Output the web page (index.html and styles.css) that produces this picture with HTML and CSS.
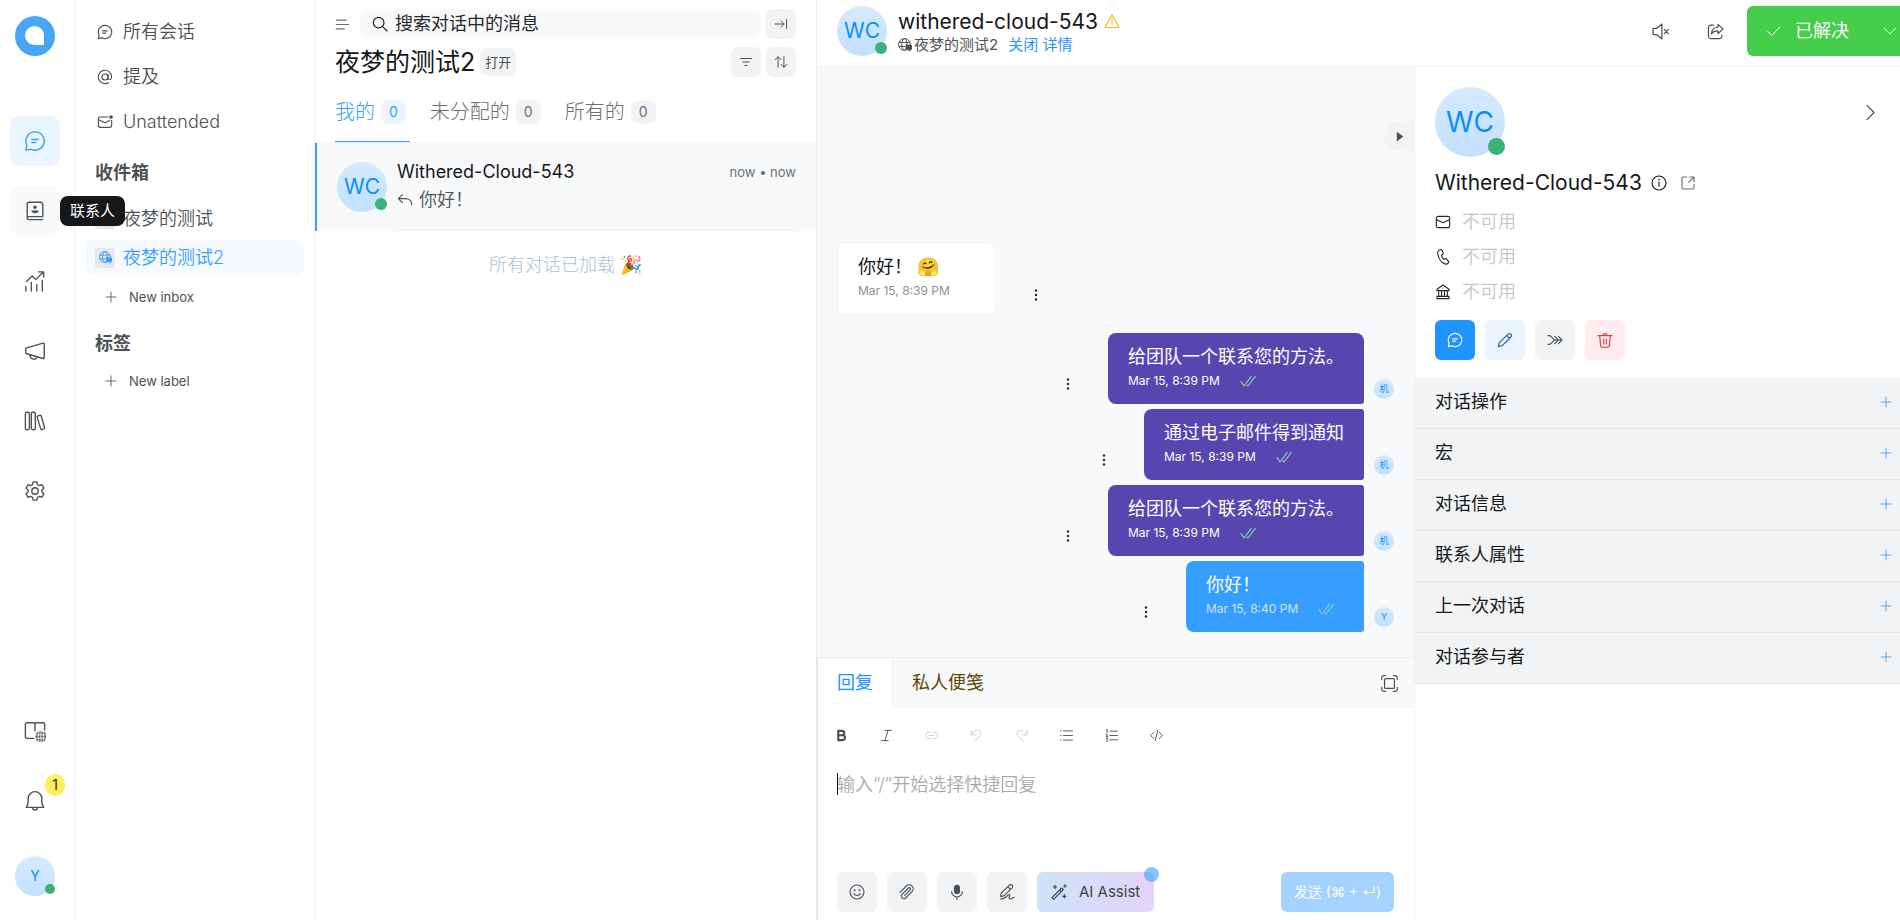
FILE: index.html
```html
<!DOCTYPE html>
<html lang="zh-CN">
<head>
    <meta charset="UTF-8" />
    <meta name="viewport" content="width=device-width, initial-scale=1.0" />
    <title>夜梦的测试2</title>
    <link rel="stylesheet" href="styles.css">
</head>
<body>

<!-- icon sprite -->
<svg class="sprite" aria-hidden="true">
    <symbol id="i-chat" viewBox="0 0 24 24"><path d="M12 2a10 10 0 1 1-4.700 18.800L2 22l1.200-5.300A10 10 0 0 1 12 2Z"/><path d="M8.500 10.300h7M8.500 13.700h4.500"/></symbol>
    <symbol id="i-at" viewBox="0 0 24 24"><circle cx="12" cy="12" r="4.500"/><path d="M16.500 7.500v6c0 3.800 5.500 3.500 5.500-1.500a10 10 0 1 0-4.500 8.300"/></symbol>
    <symbol id="i-mail" viewBox="0 0 24 24"><rect x="2" y="3.500" width="20" height="17" rx="3"/><path d="M2.500 8.500l9.500 4.800 9.500-4.800"/></symbol>
    <symbol id="i-mail-dot" viewBox="0 0 24 24"><path d="M16.500 4.500H5A3 3 0 0 0 2 7.500v9.500A3 3 0 0 0 5 20h14a3 3 0 0 0 3-3V9.500"/><path d="M2.500 8.500l9.500 4.800 7-3.700"/><circle class="fill" cx="21" cy="4.500" r="2.800"/></symbol>
    <symbol id="i-book" viewBox="0 0 24 24"><path d="M3.500 19V4.800A2.300 2.300 0 0 1 5.800 2.500h12.400a2.300 2.300 0 0 1 2.300 2.300v13.400h-17v1.200a2 2 0 0 0 2 2h15"/><circle class="fill" cx="12" cy="8" r="1.900"/><path class="fill" d="M8 11.500h8c0 4-8 4-8 0Z"/></symbol>
    <symbol id="i-chart" viewBox="0 0 24 24"><path d="M2.800 12.500l6-6 4 4L21 2.300M15.800 2h5.700v5.700M2 18v5M8 13.500V23M14 16v7M20 11.500V23"/></symbol>
    <symbol id="i-horn" viewBox="0 0 24 24"><path d="M20.800 3.500L2.900 8.500a1.400 1.400 0 0 0-1 1.300v3.900a1.400 1.400 0 0 0 1 1.300l17.900 5.200a1 1 0 0 0 1.300-1V4.500a1 1 0 0 0-1.300-1ZM6.500 16.300c0 5.200 7 6 7.800 2.300"/></symbol>
    <symbol id="i-library" viewBox="0 0 24 24"><rect x="1.500" y="2.500" width="4.400" height="19" rx="1.500"/><rect x="8" y="2.500" width="4.400" height="19" rx="1.500"/><path d="M15.400 6.300l1.600-.5a1.500 1.500 0 0 1 1.900 1.100l3.500 12.200a1.500 1.500 0 0 1-1 1.800l-1.400.4a1.500 1.500 0 0 1-1.900-1l-3.600-12.200a1.500 1.500 0 0 1 .9-1.800Z"/></symbol>
    <symbol id="i-gear" viewBox="0 0 24 24"><circle cx="12" cy="12" r="3.500"/><path d="M10 2h4l.8 3.200 1.800 1 3.100-1 2 3.600-2.200 2.300v1.800l2.200 2.300-2 3.600-3.100-1-1.800 1L14 22h-4l-.8-3.200-1.800-1-3.100 1-2-3.600 2.200-2.300v-1.800L2.300 8.800l2-3.600 3.100 1 1.800-1Z"/></symbol>
    <symbol id="i-docs" viewBox="0 0 24 24"><path d="M11 20H3A1.500 1.500 0 0 1 1.500 18.500v-14A1.500 1.500 0 0 1 3 3h7a2 2 0 0 1 2 2v7M12 5a2 2 0 0 1 2-2h7a1.500 1.500 0 0 1 1.500 1.500V11"/><circle class="fill" cx="18.500" cy="18" r="6"/><path class="cut" d="M18.500 11.500v13M12 16.200h13M12 19.800h13M16.300 12.200q-1.800 6 0 12M20.700 12.200q1.800 6 0 12"/></symbol>
    <symbol id="i-bell" viewBox="0 0 24 24"><path d="M12 1.800a7.500 7.500 0 0 0-7.500 7.500v5L2.500 19h19l-2-4.700v-5A7.500 7.500 0 0 0 12 1.800ZM9.300 19.200a2.700 2.700 0 0 0 5.400 0"/></symbol>
    <symbol id="i-globe" viewBox="0 0 24 24"><circle cx="11" cy="11" r="10"/><ellipse cx="11" cy="11" rx="4.500" ry="10"/><path d="M2 7.500h18M2 14.500h10"/><path class="fill" d="M13 12h11v8h-3v4l-4-4h-4Z"/></symbol>
    <symbol id="i-plus" viewBox="0 0 24 24"><path d="M12 2v20M2 12h20"/></symbol>
    <symbol id="i-menu" viewBox="0 0 24 24"><path d="M2 5h16M2 12h20M2 19h13"/></symbol>
    <symbol id="i-search" viewBox="0 0 24 24"><circle cx="10" cy="10" r="8"/><path d="M16 16l6.500 6.500"/></symbol>
    <symbol id="i-arrow-end" viewBox="0 0 24 24"><path d="M2 12h15M12 6.500l5.500 5.500-5.500 5.500M21.500 4.500v15"/></symbol>
    <symbol id="i-filter" viewBox="0 0 24 24"><path d="M2.500 6h19M6.500 12h11M10 18h4"/></symbol>
    <symbol id="i-sort" viewBox="0 0 24 24"><path d="M7 21V3M2 8l5-5 5 5M17 3v18M12 16l5 5 5-5"/></symbol>
    <symbol id="i-reply" viewBox="0 0 24 24"><path d="M8 4L2 10l6 6M2 10h11c5 0 8.500 3 9 9"/></symbol>
    <symbol id="i-warn" viewBox="0 0 24 24"><path d="M12 2.500L1.800 20.500a.8.800 0 0 0 .7 1.200h19a.8.800 0 0 0 .7-1.200ZM12 9v6"/><circle class="fill" cx="12" cy="18" r="1"/></symbol>
    <symbol id="i-mute" viewBox="0 0 24 24"><path d="M14 1.500L7 7.500H2.800A1.200 1.200 0 0 0 1.500 8.700v6.600a1.200 1.200 0 0 0 1.300 1.200H7l7 6ZM17.500 9l5.500 6M23 9l-5.500 6"/></symbol>
    <symbol id="i-share" viewBox="0 0 24 24"><path d="M9 3H5.500A3.500 3.500 0 0 0 2 6.500v12A3.500 3.500 0 0 0 5.500 22h12a3.500 3.500 0 0 0 3.500-3.500V17M15.500 2l7 6.500-7 6.500v-4c-5 0-7.500 1.300-9.500 4.500.5-5.500 3.500-9 9.500-9.500Z"/></symbol>
    <symbol id="i-check" viewBox="0 0 24 24"><path d="M1.500 13l6.500 7L22.500 4.500"/></symbol>
    <symbol id="i-down" viewBox="0 0 24 24"><path d="M2 7l10 10L22 7"/></symbol>
    <symbol id="i-right" viewBox="0 0 24 24"><path d="M7 2l10 10L7 22"/></symbol>
    <symbol id="i-play" viewBox="0 0 24 24"><path class="fill" d="M7 3l12 9-12 9Z"/></symbol>
    <symbol id="i-dots" viewBox="0 0 24 24"><circle class="fill" cx="12" cy="3" r="2.400"/><circle class="fill" cx="12" cy="12" r="2.400"/><circle class="fill" cx="12" cy="21" r="2.400"/></symbol>
    <symbol id="i-double" viewBox="0 0 24 24"><path d="M1.500 13l4.500 6.500L17 5M10.500 18l1.500 1.500L23 5"/></symbol>
    <symbol id="i-info" viewBox="0 0 24 24"><circle cx="12" cy="12" r="10.500"/><path d="M12 10.500V17"/><circle class="fill" cx="12" cy="7" r="1.200"/></symbol>
    <symbol id="i-external" viewBox="0 0 24 24"><path d="M10 3H5.500A2.500 2.500 0 0 0 3 5.500v13A2.500 2.500 0 0 0 5.500 21h13a2.500 2.500 0 0 0 2.500-2.500V14M14 3h7v7M21 3l-8 8"/></symbol>
    <symbol id="i-phone" viewBox="0 0 24 24"><path d="M6.500 1.600l2-.5c1-.2 1.800.2 2.200 1l1.400 3.500c.4.900.2 1.700-.5 2.300L9.800 9.700c.5 2.200 1.800 4.300 3.500 5.800l2.400-.7c.9-.2 1.700 0 2.200.8l2.200 3c.5.800.4 1.700-.2 2.300l-1 .9c-1 1-2.500 1.200-4 .5C9 20 4.700 13 4 6.200c-.1-2 .8-4.100 2.500-4.600Z"/></symbol>
    <symbol id="i-bank" viewBox="0 0 24 24"><path d="M12 1.500L3 8v2h18V8ZM3 18.500h18v3.500H3ZM5.500 10v8M9.800 10v8M14.200 10v8M18.500 10v8M12 6h.1"/></symbol>
    <symbol id="i-pen" viewBox="0 0 24 24"><path d="M20.800 3.200a3 3 0 0 0-4.300 0L4 15.700c-.4.400-.6.800-.7 1.300L2 22l5-1.300c.5-.1.900-.3 1.300-.7L20.800 7.500a3 3 0 0 0 0-4.300ZM14.500 5.200l4.300 4.300"/></symbol>
    <symbol id="i-merge" viewBox="0 0 24 24"><path d="M1.500 5.500h2c4 0 5 6.500 9 6.500h10M1.500 18.500h2c4 0 5-6.500 9-6.500M17 6.500l5.500 5.500-5.500 5.500M11.500 6.500L17 12l-5.500 5.500"/></symbol>
    <symbol id="i-trash" viewBox="0 0 24 24"><path d="M1.500 5.500h21M9 5.500a3 3 0 0 1 6 0M4 5.500l1.500 15a2.500 2.500 0 0 0 2.500 2.300h8a2.500 2.500 0 0 0 2.500-2.300l1.500-15M10 10.500v7.500M14 10.500v7.500"/></symbol>
    <symbol id="i-full" viewBox="0 0 24 24"><rect x="5" y="5" width="14" height="14" rx="1.500"/><path d="M1 6.500V4A3 3 0 0 1 4 1H6.500M17.500 1H20A3 3 0 0 1 23 4V6.500M23 17.500v2.500a3 3 0 0 1-3 3H17.500M6.500 23H4A3 3 0 0 1 1 20V17.500"/></symbol>
    <symbol id="i-bold" viewBox="0 0 24 24"><path d="M6 3.500h7a4 4 0 0 1 0 8H6ZM6 11.500h8a4.500 4.500 0 0 1 0 9H6Z" stroke-width="4"/></symbol>
    <symbol id="i-italic" viewBox="0 0 24 24"><path d="M9 2.500h12M3 21.500h12M15 2.500L9 21.500"/></symbol>
    <symbol id="i-link" viewBox="0 0 24 24"><path d="M9.500 6H7a6 6 0 0 0 0 12h2.500M14.500 6H17a6 6 0 0 1 0 12h-2.500M8 12h8"/></symbol>
    <symbol id="i-undo" viewBox="0 0 24 24"><path d="M2 2v9h9M2.500 10.500L9 4a6.500 6.500 0 0 1 9.500 9L9 22.500"/></symbol>
    <symbol id="i-redo" viewBox="0 0 24 24"><path d="M22 2v9h-9M21.500 10.500L15 4a6.500 6.500 0 0 0-9.500 9L15 22.500"/></symbol>
    <symbol id="i-ul" viewBox="0 0 24 24"><path d="M6.500 3.500H23M6.500 12H23M6.500 20.500H23M1 3.500h1M1 12h1M1 20.500h1"/></symbol>
    <symbol id="i-ol" viewBox="0 0 24 24"><path d="M9 4h14M9 12h14M9 20h14M2.500 1.500L4 .500v6M2 9.500q3-1 2.500 1L2 14h3.500M2 17h3L3.500 19.500q2 0 1.500 2t-3 1"/></symbol>
    <symbol id="i-code" viewBox="0 0 24 24"><path d="M7 6l-6 6 6 6M17 6l6 6-6 6M14.500 2.500l-5 19"/></symbol>
    <symbol id="i-smile" viewBox="0 0 24 24"><circle cx="12" cy="12" r="10.500"/><path d="M7 14.500a6 6 0 0 0 10 0"/><circle class="fill" cx="8.500" cy="9.300" r="1.400"/><circle class="fill" cx="15.500" cy="9.300" r="1.400"/></symbol>
    <symbol id="i-clip" viewBox="0 0 24 24"><path d="M1.500 12.500l9.500-9.500a5.800 5.800 0 0 1 8.500 8.500L10 21a3.900 3.900 0 0 1-5.500-5.500l9.500-9.500a1.900 1.900 0 0 1 2.700 2.700L8.500 17"/></symbol>
    <symbol id="i-mic" viewBox="0 0 24 24"><rect class="fill" x="7.500" y="1" width="9" height="14.500" rx="4.500"/><path d="M4 11.500a8 8 0 0 0 16 0M12 19.500V23"/></symbol>
    <symbol id="i-sign" viewBox="0 0 24 24"><path d="M2.500 17.500l1-4L15.500 1.800a2.900 2.900 0 0 1 4.100 4.100L8 17.500l-5.500 1.500ZM13.500 4.300l3.700 3.700M2 22.500c5 0 8-2 11-5.500 2.500-2.500 4-.5 2.500 2s1 4.500 3.500 2.800l3.500-2"/></symbol>
    <symbol id="i-wand" viewBox="0 0 24 24"><path d="M1.500 20.500L16 6l2.500 2.500L4 23ZM13 9l2.500 2.500M21 1v4M19 3h4M6 2v5M3.500 4.500h5M20 16v5M17.500 18.500h5"/></symbol>
</svg>

<div class="app">

    <nav class="rail">
        <a class="logo" href="#" aria-label="Home">
            <svg viewBox="0 0 40 40"><circle cx="20" cy="20" r="20" fill="#47a7f6"/><path d="M29 29H19.300A9.500 9.500 0 1 1 29 19.500Z" fill="#fff"/></svg>
        </a>
        <div class="rail-menu">
            <a class="rail-link active" href="#" aria-label="会话"><svg class="icon"><use href="#i-chat"/></svg></a>
            <a class="rail-link hover" href="#" aria-label="联系人"><svg class="icon"><use href="#i-book"/></svg><span class="tooltip">联系人</span></a>
            <a class="rail-link" href="#" aria-label="报告"><svg class="icon"><use href="#i-chart"/></svg></a>
            <a class="rail-link" href="#" aria-label="营销"><svg class="icon"><use href="#i-horn"/></svg></a>
            <a class="rail-link" href="#" aria-label="帮助中心"><svg class="icon"><use href="#i-library"/></svg></a>
            <a class="rail-link" href="#" aria-label="设置"><svg class="icon"><use href="#i-gear"/></svg></a>
        </div>
        <div class="rail-bottom">
            <a class="rail-link" href="#" aria-label="文档"><svg class="icon"><use href="#i-docs"/></svg></a>
            <a class="rail-link" href="#" aria-label="通知"><svg class="icon"><use href="#i-bell"/></svg><span class="count">1</span></a>
            <button class="avatar avatar-user" type="button">Y<span class="dot"></span></button>
        </div>
    </nav>

    <aside class="sidebar">
        <a class="side-link" href="#"><svg class="icon"><use href="#i-chat"/></svg>所有会话</a>
        <a class="side-link" href="#"><svg class="icon"><use href="#i-at"/></svg>提及</a>
        <a class="side-link" href="#"><svg class="icon"><use href="#i-mail-dot"/></svg>Unattended</a>

        <h2 class="side-title">收件箱</h2>
        <a class="side-link inbox" href="#"><span class="inbox-icon"><svg class="icon"><use href="#i-globe"/></svg></span>夜梦的测试</a>
        <a class="side-link inbox selected" href="#"><span class="inbox-icon"><svg class="icon"><use href="#i-globe"/></svg></span>夜梦的测试2</a>
        <button class="side-new" type="button"><svg class="icon"><use href="#i-plus"/></svg>New inbox</button>

        <h2 class="side-title">标签</h2>
        <button class="side-new" type="button"><svg class="icon"><use href="#i-plus"/></svg>New label</button>
    </aside>

    <section class="list">
        <div class="list-search">
            <button class="menu-btn" type="button" aria-label="菜单"><svg class="icon"><use href="#i-menu"/></svg></button>
            <label class="search">
                <svg class="icon"><use href="#i-search"/></svg>
                <input type="text" placeholder="搜索对话中的消息" aria-label="搜索对话中的消息" />
            </label>
            <button class="small-btn" type="button" aria-label="展开"><svg class="icon"><use href="#i-arrow-end"/></svg></button>
        </div>
        <div class="list-head">
            <h1>夜梦的测试2</h1>
            <span class="status">打开</span>
            <button class="small-btn push" type="button" aria-label="筛选"><svg class="icon"><use href="#i-filter"/></svg></button>
            <button class="small-btn" type="button" aria-label="排序"><svg class="icon"><use href="#i-sort"/></svg></button>
        </div>
        <div class="list-tabs">
            <a class="tab active" href="#">我的<span>0</span></a>
            <a class="tab" href="#">未分配的<span>0</span></a>
            <a class="tab" href="#">所有的<span>0</span></a>
        </div>
        <a class="conversation" href="#">
            <div class="avatar avatar-md">WC<span class="dot"></span></div>
            <div class="conversation-body">
                <div class="conversation-top">
                    <span class="name">Withered-Cloud-543</span>
                    <span class="when">now • now</span>
                </div>
                <div class="preview"><svg class="icon"><use href="#i-reply"/></svg>你好！</div>
            </div>
        </a>
        <p class="list-end">所有对话已加载 🎉</p>
    </section>

    <main class="main">
        <header class="chat-head">
            <div class="avatar avatar-md">WC<span class="dot"></span></div>
            <div class="chat-who">
                <div class="chat-name">withered-cloud-543 <svg class="icon warn"><use href="#i-warn"/></svg></div>
                <div class="chat-sub"><svg class="icon"><use href="#i-globe"/></svg>夜梦的测试2 <a href="#">关闭 详情</a></div>
            </div>
            <div class="chat-actions">
                <button class="plain-btn" type="button" aria-label="静音"><svg class="icon"><use href="#i-mute"/></svg></button>
                <button class="plain-btn" type="button" aria-label="分享"><svg class="icon"><use href="#i-share"/></svg></button>
                <div class="resolve">
                    <button class="resolve-main" type="button"><svg class="icon"><use href="#i-check"/></svg>已解决</button>
                    <button class="resolve-more" type="button" aria-label="更多"><svg class="icon"><use href="#i-down"/></svg></button>
                </div>
            </div>
        </header>

        <div class="content">
            <section class="chat">
                <button class="panel-toggle" type="button" aria-label="收起"><svg class="icon"><use href="#i-play"/></svg></button>
                <div class="messages">
                    <div class="message incoming">
                        <div class="bubble"><p>你好！ 🤗</p><div class="meta">Mar 15, 8:39 PM</div></div>
                        <button class="more" type="button" aria-label="更多"><svg class="icon"><use href="#i-dots"/></svg></button>
                    </div>
                    <div class="message">
                        <button class="more" type="button" aria-label="更多"><svg class="icon"><use href="#i-dots"/></svg></button>
                        <div class="bubble bot first"><p>给团队一个联系您的方法。</p><div class="meta">Mar 15, 8:39 PM<svg class="icon"><use href="#i-double"/></svg></div></div>
                        <div class="avatar avatar-xs">机</div>
                    </div>
                    <div class="message">
                        <button class="more" type="button" aria-label="更多"><svg class="icon"><use href="#i-dots"/></svg></button>
                        <div class="bubble bot"><p>通过电子邮件得到通知</p><div class="meta">Mar 15, 8:39 PM<svg class="icon"><use href="#i-double"/></svg></div></div>
                        <div class="avatar avatar-xs">机</div>
                    </div>
                    <div class="message">
                        <button class="more" type="button" aria-label="更多"><svg class="icon"><use href="#i-dots"/></svg></button>
                        <div class="bubble bot"><p>给团队一个联系您的方法。</p><div class="meta">Mar 15, 8:39 PM<svg class="icon"><use href="#i-double"/></svg></div></div>
                        <div class="avatar avatar-xs">机</div>
                    </div>
                    <div class="message">
                        <button class="more" type="button" aria-label="更多"><svg class="icon"><use href="#i-dots"/></svg></button>
                        <div class="bubble agent"><p>你好！</p><div class="meta">Mar 15, 8:40 PM<svg class="icon"><use href="#i-double"/></svg></div></div>
                        <div class="avatar avatar-xs">Y</div>
                    </div>
                </div>

                <form class="composer">
                    <div class="composer-tabs">
                        <button class="composer-tab active" type="button">回复</button>
                        <button class="composer-tab note" type="button">私人便笺</button>
                        <button class="plain-btn push" type="button" aria-label="全屏"><svg class="icon"><use href="#i-full"/></svg></button>
                    </div>
                    <div class="format">
                        <button type="button" aria-label="粗体"><svg class="icon"><use href="#i-bold"/></svg></button>
                        <button type="button" aria-label="斜体"><svg class="icon"><use href="#i-italic"/></svg></button>
                        <button type="button" aria-label="链接" disabled><svg class="icon"><use href="#i-link"/></svg></button>
                        <button type="button" aria-label="撤销" disabled><svg class="icon"><use href="#i-undo"/></svg></button>
                        <button type="button" aria-label="重做" disabled><svg class="icon"><use href="#i-redo"/></svg></button>
                        <button type="button" aria-label="列表"><svg class="icon"><use href="#i-ul"/></svg></button>
                        <button type="button" aria-label="编号列表"><svg class="icon"><use href="#i-ol"/></svg></button>
                        <button type="button" aria-label="代码"><svg class="icon"><use href="#i-code"/></svg></button>
                    </div>
                    <div class="editor">
                        <textarea placeholder="输入“/”开始选择快捷回复" aria-label="回复"></textarea>
                    </div>
                    <div class="composer-actions">
                        <button class="square" type="button" aria-label="表情"><svg class="icon"><use href="#i-smile"/></svg></button>
                        <button class="square" type="button" aria-label="附件"><svg class="icon"><use href="#i-clip"/></svg></button>
                        <button class="square" type="button" aria-label="录音"><svg class="icon"><use href="#i-mic"/></svg></button>
                        <button class="square" type="button" aria-label="签名"><svg class="icon"><use href="#i-sign"/></svg></button>
                        <button class="ai" type="button"><svg class="icon"><use href="#i-wand"/></svg>AI Assist<span class="ping"></span></button>
                        <button class="send" type="submit" disabled>发送 (⌘ + ↵)</button>
                    </div>
                </form>
            </section>

            <aside class="contact">
                <div class="contact-info">
                    <div class="contact-top">
                        <div class="avatar avatar-lg">WC<span class="dot"></span></div>
                        <button class="plain-btn close" type="button" aria-label="关闭"><svg class="icon"><use href="#i-right"/></svg></button>
                    </div>
                    <h3>Withered-Cloud-543 <svg class="icon"><use href="#i-info"/></svg><a href="#" aria-label="打开联系人"><svg class="icon"><use href="#i-external"/></svg></a></h3>
                    <ul class="contact-rows">
                        <li><svg class="icon"><use href="#i-mail"/></svg>不可用</li>
                        <li><svg class="icon"><use href="#i-phone"/></svg>不可用</li>
                        <li><svg class="icon"><use href="#i-bank"/></svg>不可用</li>
                    </ul>
                    <div class="contact-actions">
                        <button class="square primary" type="button" aria-label="新消息"><svg class="icon"><use href="#i-chat"/></svg></button>
                        <button class="square edit" type="button" aria-label="编辑"><svg class="icon"><use href="#i-pen"/></svg></button>
                        <button class="square" type="button" aria-label="合并"><svg class="icon"><use href="#i-merge"/></svg></button>
                        <button class="square danger" type="button" aria-label="删除"><svg class="icon"><use href="#i-trash"/></svg></button>
                    </div>
                </div>
                <div class="accordion">
                    <button type="button">对话操作<svg class="icon"><use href="#i-plus"/></svg></button>
                    <button type="button">宏<svg class="icon"><use href="#i-plus"/></svg></button>
                    <button type="button">对话信息<svg class="icon"><use href="#i-plus"/></svg></button>
                    <button type="button">联系人属性<svg class="icon"><use href="#i-plus"/></svg></button>
                    <button type="button">上一次对话<svg class="icon"><use href="#i-plus"/></svg></button>
                    <button type="button">对话参与者<svg class="icon"><use href="#i-plus"/></svg></button>
                </div>
            </aside>
        </div>
    </main>

</div>

</body>
</html>
```

FILE: styles.css
```css
* {
    box-sizing: border-box;
}

html, body {
    margin: 0;
    padding: 0;
    height: 100%;
}

body {
    overflow: hidden;
    font-family: Inter, "Noto Sans CJK SC", sans-serif;
    font-size: 18px;
    font-weight: 400;
    line-height: 24px;
    color: #151718;
    background: #fff;
}

button, input, textarea {
    font: inherit;
    color: inherit;
    border: none;
    background: none;
    padding: 0;
}

button {
    display: flex;
    align-items: center;
    justify-content: center;
    cursor: pointer;
    flex: none;
}

a {
    color: inherit;
    text-decoration: none;
}

h1, h2, h3, p, ul {
    margin: 0;
    padding: 0;
    font-size: inherit;
    font-weight: inherit;
    list-style: none;
}

.sprite {
    position: absolute;
    width: 0;
    height: 0;
}

.icon {
    width: 16px;
    height: 16px;
    flex: none;
    fill: none;
    stroke: currentColor;
    stroke-width: 1.7;
    stroke-linecap: round;
    stroke-linejoin: round;
    overflow: visible;
}

.fill {
    fill: currentColor;
    stroke: none;
}

.cut {
    stroke: #fff;
    stroke-width: 1;
}

.push {
    margin-left: auto;
}

.app {
    display: flex;
    height: 100vh;
    overflow: hidden;
}

/* avatars */
.avatar {
    position: relative;
    display: flex;
    align-items: center;
    justify-content: center;
    flex: none;
    border-radius: 50%;
    background: linear-gradient(#d6eaff, #c2e0ff);
    color: #0a8dff;
}

.dot {
    position: absolute;
    right: 0;
    bottom: 2px;
    width: 24%;
    height: 24%;
    border-radius: 50%;
    background: #3cb179;
}

.avatar-user {
    width: 40px;
    height: 40px;
    font-size: 14px;
}

.avatar-md {
    width: 50px;
    height: 50px;
    font-size: 21px;
}

.avatar-lg {
    width: 70px;
    height: 70px;
    font-size: 28px;
}

.avatar-xs {
    width: 20px;
    height: 20px;
    font-size: 9px;
}

/* left rail */
.rail {
    display: flex;
    flex-direction: column;
    align-items: center;
    width: 75px;
    flex: none;
    padding: 16px 14px 24px 10px;
    border-right: 1px solid #f1f3f5;
    color: #4c5155;
}

.logo, .logo svg {
    display: block;
    width: 40px;
    height: 40px;
}

.rail-menu {
    display: flex;
    flex-direction: column;
    gap: 20px;
    margin-top: 60px;
}

.rail-link {
    position: relative;
    display: flex;
    align-items: center;
    justify-content: center;
    width: 50px;
    height: 50px;
    border-radius: 10px;
}

.rail-link .icon {
    width: 22px;
    height: 22px;
    stroke-width: 1.5;
}

.rail-link.active {
    background: #ebf5ff;
    color: #369eff;
}

.rail-link.hover {
    background: #f8f9fb;
}

.tooltip {
    position: absolute;
    left: 50px;
    top: 10px;
    z-index: 5;
    padding: 3px 10px;
    border-radius: 8px;
    background: #151718;
    color: #fff;
    font-size: 15px;
    white-space: nowrap;
}

.rail-bottom {
    display: flex;
    flex-direction: column;
    align-items: center;
    gap: 20px;
    margin-top: auto;
}

.rail-bottom .avatar {
    margin-top: 10px;
}

.count {
    position: absolute;
    right: -5px;
    top: -2px;
    width: 20px;
    height: 22px;
    border-radius: 10px;
    background: #ffef5c;
    color: #35290f;
    font-size: 14px;
    line-height: 22px;
    text-align: center;
}

/* inbox sidebar */
.sidebar {
    width: 240px;
    flex: none;
    padding: 14px 10px;
    border-right: 1px solid #f1f3f5;
    color: #4c5155;
}

.side-link {
    display: flex;
    align-items: center;
    gap: 10px;
    height: 35px;
    margin-bottom: 10px;
    padding: 0 12px;
    border-radius: 8px;
    font-weight: 350;
}

.side-title {
    margin: 22px 10px 13px;
    font-weight: 700;
}

.side-title + .side-link {
    margin-top: 16px;
}

.side-link.inbox {
    gap: 8px;
    margin-bottom: 4px;
    padding: 0 10px;
}

.inbox-icon {
    display: flex;
    align-items: center;
    justify-content: center;
    width: 20px;
    height: 20px;
    border-radius: 3px;
    background: #e6e8eb;
}

.inbox-icon .icon {
    width: 13px;
    height: 13px;
}

.side-link.selected {
    background: #f5faff;
    color: #369eff;
}

.side-new {
    gap: 12px;
    height: 24px;
    margin: 10px 20px 23px;
    font-size: 13px;
}

.side-new .icon {
    width: 12px;
    height: 12px;
}

.side-title + .side-new {
    margin-top: 13px;
}

/* conversation list */
.list {
    display: flex;
    flex-direction: column;
    width: 502px;
    flex: none;
    padding-top: 9px;
    border-right: 1px solid #ebedef;
}

.list-search, .list-head {
    display: flex;
    align-items: center;
    gap: 5px;
    padding: 0 20px;
}

.menu-btn {
    margin-right: 5px;
    color: #687076;
}

.menu-btn .icon {
    width: 15px;
    height: 15px;
}

.search {
    display: flex;
    align-items: center;
    flex: 1;
    gap: 7px;
    height: 30px;
    padding: 0 12px;
    border-radius: 8px;
    background: #f8f9fb;
}

.search input {
    flex: 1;
    min-width: 0;
    outline: none;
}

.search input::placeholder {
    color: #26292b;
    opacity: 1;
}

.small-btn {
    width: 30px;
    height: 30px;
    border-radius: 7px;
    background: #f1f3f5;
    color: #4c5155;
}

.small-btn .icon {
    width: 14px;
    height: 14px;
}

.list-head {
    margin-top: 8px;
}

.list-head h1 {
    font-size: 25px;
    line-height: 30px;
}

.status {
    padding: 2px 5px;
    border-radius: 7px;
    background: #f1f3f5;
    color: #4c5155;
    font-size: 13px;
}

.list-tabs {
    display: flex;
    gap: 20px;
    height: 66px;
    padding: 0 20px;
    border-bottom: 1px solid #f1f3f5;
}

.tab {
    display: flex;
    align-items: center;
    gap: 6px;
    padding: 5px 4px 0 0;
    font-size: 20px;
    font-weight: 300;
    color: #687076;
    border-bottom: 1px solid transparent;
}

.tab span {
    padding: 0 8px;
    border-radius: 8px;
    background: #f1f3f5;
    font-size: 14px;
    font-weight: 400;
}

.tab.active {
    color: #369eff;
    border-color: #369eff;
}

.tab.active span {
    background: #ebf5ff;
}

.conversation {
    display: flex;
    align-items: center;
    gap: 10px;
    height: 88px;
    padding-left: 20px;
    padding-right: 20px;
    border-left: 2px solid #369eff;
    background: #f8f9fb;
}

.conversation-body {
    flex: 1;
    align-self: stretch;
    padding-top: 17px;
    border-bottom: 1px solid #f1f3f5;
}

.conversation-top {
    display: flex;
    align-items: center;
    justify-content: space-between;
}

.when {
    font-size: 13px;
    color: #687076;
}

.preview {
    display: flex;
    align-items: center;
    gap: 6px;
    margin-top: 4px;
    color: #4c5155;
    font-weight: 350;
}

.list-end {
    margin-top: 22px;
    text-align: center;
    color: #adc2d6;
    font-weight: 300;
}

/* chat header */
.main {
    display: flex;
    flex-direction: column;
    flex: 1;
    min-width: 0;
}

.chat-head {
    display: flex;
    align-items: center;
    gap: 11px;
    height: 67px;
    flex: none;
    padding: 6px 0 10px 20px;
    border-bottom: 1px solid #f1f3f5;
}

.chat-who {
    align-self: flex-end;
}

.chat-name {
    font-size: 21px;
}

.chat-name .warn {
    color: #ebbc00;
}

.chat-sub {
    display: flex;
    align-items: center;
    gap: 2px;
    font-size: 15px;
    line-height: 22px;
    color: #4c5155;
}

.chat-sub .icon {
    width: 14px;
    height: 14px;
}

.chat-sub a {
    margin-left: 8px;
    color: #1f93ff;
}

.chat-actions {
    display: flex;
    align-items: center;
    gap: 15px;
    margin-left: auto;
}

.plain-btn {
    width: 40px;
    height: 40px;
    color: #4c5155;
}

.plain-btn .icon {
    width: 17px;
    height: 17px;
}

.chat-actions .resolve {
    margin-left: -3px;
}

.resolve {
    display: flex;
    height: 50px;
    border-radius: 6px 0 0 6px;
    background: #44ce4b;
    color: #fff;
}

.resolve-main {
    gap: 14px;
    padding: 0 20px;
}

.resolve-more {
    padding: 0 3px 0 14px;
}

.resolve .icon {
    width: 14px;
    height: 14px;
}

/* chat */
.content {
    display: flex;
    flex: 1;
    min-height: 0;
}

.chat {
    position: relative;
    display: flex;
    flex-direction: column;
    flex: 1;
    min-width: 0;
    background: #f8f9fb;
}

.panel-toggle {
    position: absolute;
    right: 0;
    top: 54px;
    width: 30px;
    height: 30px;
    border-radius: 15px 0 0 15px;
    background: #f1f3f5;
    color: #4c5155;
}

.panel-toggle .icon {
    width: 13px;
    height: 13px;
}

.messages {
    display: flex;
    flex-direction: column;
    justify-content: flex-end;
    flex: 1;
    gap: 5px;
    padding: 0 20px 25px;
}

.message {
    display: flex;
    align-items: flex-end;
    justify-content: flex-end;
    gap: 10px;
}

.message.incoming {
    justify-content: flex-start;
    margin-bottom: 13px;
}

.bubble {
    padding: 12px 20px 11px;
    border-radius: 8px 3px 3px 8px;
    color: #fff;
}

.bubble.first {
    border-radius: 8px 8px 3px 8px;
}

.incoming .bubble {
    min-width: 159px;
    border: 1px solid #f1f3f5;
    border-radius: 4px 8px 8px 4px;
    background: #fff;
    color: #151718;
}

.bubble.bot {
    background: #5746af;
}

.bubble.agent {
    min-width: 178px;
    background: #369eff;
}

.meta {
    display: flex;
    align-items: center;
    gap: 20px;
    font-size: 12px;
}

.meta .icon {
    color: #8fceb0;
}

.incoming .meta {
    color: #889096;
}

.agent .meta {
    color: #c9e5ff;
}

.more {
    width: 20px;
    height: 20px;
    margin: 0 20px 10px 0;
    color: #26292b;
}

.more .icon {
    width: 12px;
    height: 12px;
}

.incoming .more {
    margin-left: 20px;
}

.message .avatar {
    margin-bottom: 5px;
}

/* reply box */
.composer {
    display: flex;
    flex-direction: column;
    height: 263px;
    flex: none;
    border-top: 1px solid #ebedef;
    border-left: 1px solid #dfe3e6;
    background: #fff;
}

.composer-tabs {
    display: flex;
    height: 50px;
    flex: none;
    background: #f8f9fb;
    border-bottom: 1px solid #f1f3f5;
}

.composer-tab {
    padding: 0 19px;
    height: 50px;
}

.composer-tab.active {
    background: #fff;
    border-right: 1px solid #ebedef;
    color: #1f93ff;
}

.composer-tab.note {
    color: #5c4600;
}

.composer-tabs .plain-btn {
    height: 50px;
    margin-right: 5px;
}

.format {
    display: flex;
    gap: 25px;
    padding: 17px 13px 0;
    color: #4c5155;
}

.format button {
    width: 20px;
    height: 20px;
}

.format .icon {
    width: 13px;
    height: 13px;
}

.format button:disabled {
    color: #ccc;
}

.editor {
    position: relative;
    flex: 1;
    padding: 28px 19px 0;
}

.editor::before {
    content: '';
    position: absolute;
    left: 19px;
    top: 28px;
    width: 1px;
    height: 22px;
    background: #151718;
}

.editor textarea {
    display: block;
    width: 100%;
    height: 50px;
    resize: none;
    outline: none;
    font-weight: 350;
}

.editor textarea::placeholder {
    color: #aaa;
    opacity: 1;
}

.composer-actions {
    display: flex;
    gap: 10px;
    padding: 0 20px 8px 19px;
}

.square {
    width: 40px;
    height: 40px;
    border-radius: 6px;
    background: #f1f3f5;
    color: #4c5155;
}

.ai {
    position: relative;
    gap: 12px;
    height: 40px;
    padding: 0 14px;
    border-radius: 6px;
    background: linear-gradient(90deg, #cfe2fa, #e4d4f7);
    color: #3e4347;
    font-size: 15px;
}

.ping {
    position: absolute;
    right: -5px;
    top: -5px;
    width: 15px;
    height: 15px;
    border-radius: 50%;
    background: #369eff;
    opacity: 0.6;
}

.send {
    height: 40px;
    margin-left: auto;
    padding: 0 13px;
    border-radius: 6px;
    background: #a5d3ff;
    color: #fff;
    font-size: 14px;
}

/* contact panel */
.contact {
    width: 486px;
    flex: none;
    border-left: 1px solid #f1f3f5;
}

.contact-info {
    padding: 20px 20px 18px;
}

.contact-top {
    display: flex;
    justify-content: space-between;
}

.close {
    width: 20px;
    height: 50px;
}

.contact h3 {
    display: flex;
    align-items: center;
    gap: 9px;
    margin-top: 14px;
    font-size: 21px;
}

.contact h3 a {
    display: flex;
    margin-left: 4px;
    color: #687076;
}

.contact-rows {
    display: flex;
    flex-direction: column;
    gap: 11px;
    margin-top: 15px;
    font-weight: 350;
}

.contact-rows li {
    display: flex;
    align-items: center;
    gap: 11px;
    color: #c1c8cd;
}

.contact-rows .icon {
    color: #26292b;
}

.contact-actions {
    display: flex;
    gap: 10px;
    margin-top: 16px;
}

.square.primary {
    background: #1f93ff;
    color: #fff;
}

.square.edit {
    background: #ebf5ff;
    color: #256299;
}

.square.danger {
    background: #ffecee;
    color: #dc3d43;
}

.accordion button {
    width: 100%;
    height: 51px;
    justify-content: space-between;
    padding: 0 8px 2px 20px;
    border-bottom: 1px solid #e6e8eb;
    background: #f1f3f5;
}

.accordion .icon {
    width: 12px;
    height: 12px;
    color: #369eff;
}
```
